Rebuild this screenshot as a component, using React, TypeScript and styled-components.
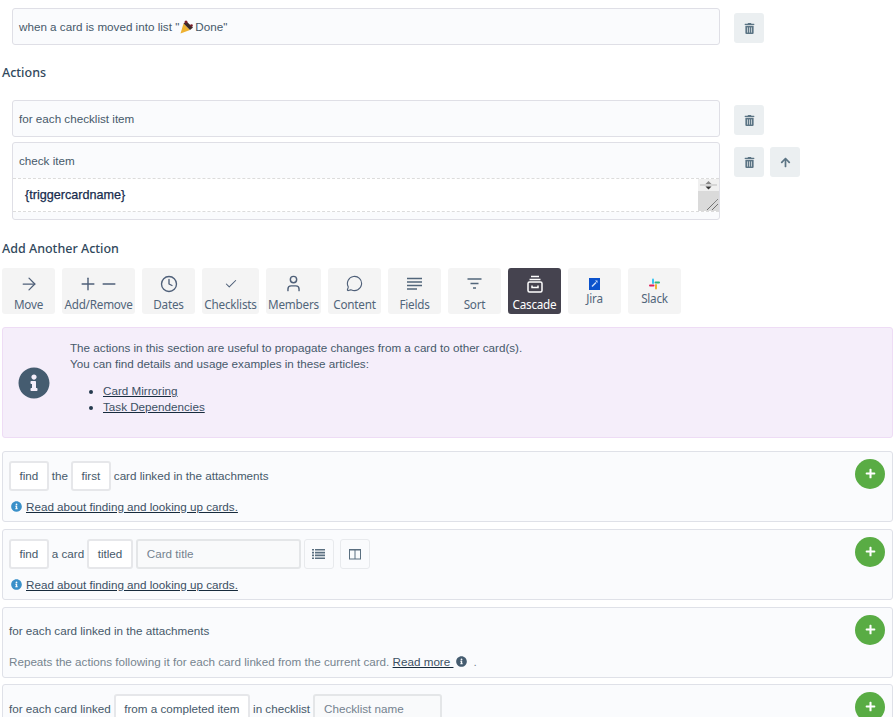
import React from "react";
import styled, { createGlobalStyle } from "styled-components";
import { FaTrashAlt, FaArrowUp, FaInfoCircle, FaPlus } from "react-icons/fa";
import { ArrowRight, Plus, Minus, Clock, Check, User, MessageCircle } from "lucide-react";

const Global = createGlobalStyle`
  html, body { margin: 0; padding: 0; height: 717px; overflow: hidden; background: #fff; }
  body { font-family: "Liberation Sans", Arial, sans-serif; font-size: 11.67px; color: #3f5262; }
`;
const Page = styled.div`
  width: 896px; height: 717px; overflow: hidden; padding: 8px 3px 0 2px; box-sizing: border-box;
`;
const RuleRow = styled.div<{ $mt?: number }>`
  display: flex; align-items: flex-start; gap: 14px; padding-left: 10px; margin-top: ${p => p.$mt ?? 0}px;
`;
const RuleBox = styled.div`
  width: 708px; box-sizing: border-box; border: 1px solid #dfdfe6; border-radius: 3px; background: #fafbfd;
`;
const RuleText = styled.div`
  height: 35px; box-sizing: border-box; padding: 0 0 0 6px; color: #46596a; display: flex; align-items: center;
`;
const RuleTools = styled.div`
  display: flex; gap: 6px; margin-top: 5px;
`;
const ToolButton = styled.button`
  width: 30px; height: 30px; padding: 0; border: 0; border-radius: 3px; background: #ebeff1; color: #5b7484;
  display: flex; align-items: center; justify-content: center; font-size: 11px;
`;
const Heading = styled.h3<{ $mt: number; $mb: number }>`
  font-family: "Noto Sans", sans-serif; font-size: 12.5px; font-weight: 500; line-height: 18px; color: #31485c;
  margin: ${p => p.$mt}px 0 ${p => p.$mb}px 0;
`;
const Editor = styled.div`
  display: flex; height: 32px; box-sizing: content-box; background: #fff; border-top: 1px dashed #dcdcdc; border-bottom: 1px dashed #dcdcdc;
  margin-bottom: 7px;
`;
const EditorText = styled.div`
  flex: 1; padding-left: 12px; line-height: 33px; font-size: 12.6px; color: #172b4d; -webkit-text-stroke: 0.25px #172b4d;
`;
const Scroll = styled.div`
  width: 21px; background: #dadada; display: flex; flex-direction: column;
`;
const ScrollTop = styled.div`
  height: 12px; background: #f0f0f0; display: flex; align-items: center; justify-content: center;
`;
const ScrollGrip = styled.div`
  flex: 1; display: flex; align-items: flex-end; justify-content: flex-end;
`;
const ActionBar = styled.div`
  display: flex; gap: 7px;
`;
const ActionButton = styled.div<{ $w: number; $active?: boolean; $brand?: boolean }>`
  width: ${p => p.$w}px; height: 46px; box-sizing: border-box; border-radius: 3px;
  background: ${p => (p.$active ? "#45434f" : "#f4f4f4")}; color: ${p => (p.$active ? "#fff" : "#51657a")};
  display: flex; flex-direction: column; align-items: center;
  padding-top: ${p => (p.$brand ? 9 : 4)}px;
  font-family: "Noto Sans", sans-serif; font-size: 11.7px; line-height: 16px; white-space: nowrap; letter-spacing: -0.22px;
`;
const ActionIcon = styled.div<{ $brand?: boolean }>`
  height: ${p => (p.$brand ? 13 : 23)}px; display: flex; align-items: center; justify-content: center;
  color: #4e5f78; gap: 1px; margin-bottom: ${p => (p.$brand ? 0 : 1)}px;
`;
const Notice = styled.div`
  display: flex; height: 111px; box-sizing: border-box; margin-top: 13px; background: #f5eefa; border: 1px solid #eedcf5;
  border-radius: 3px; color: #46596a; line-height: 16px;
`;
const NoticeIcon = styled.div`
  width: 67px; flex: none; display: flex; align-items: center; justify-content: center; color: #455c70; font-size: 32px;
  padding: 1px 6px 0 0; box-sizing: border-box;
`;
const NoticeBody = styled.div`
  padding-top: 12px;
`;
const ArticleList = styled.ul`
  margin: 11px 0 0; padding: 0 0 0 33px;
  li::marker { color: #24394d; }
`;
const Link = styled.a`
  color: #3c5064; text-decoration: underline; text-decoration-color: #172b3d;
`;
const Card = styled.div<{ $mt: number }>`
  height: 71px; box-sizing: border-box; margin-top: ${p => p.$mt}px; border: 1px solid #dfe1e8; border-radius: 3px;
  background: #fafbfd; padding: 9px 6px 0; position: relative; color: #46596a;
`;
const CardLine = styled.div`
  display: flex; align-items: center; gap: 3px; height: 30px; box-sizing: border-box; padding-bottom: 2px; white-space: nowrap;
`;
const Chip = styled.div`
  align-self: flex-start;
  height: 30px; box-sizing: border-box; padding: 0 8.5px 2px; border: 2px solid #e6e7ea; border-radius: 3px; background: #fff;
  display: flex; align-items: center; color: #46596a;
`;
const Field = styled.div<{ $w: number }>`
  align-self: flex-start;
  width: ${p => p.$w}px; height: 30px; box-sizing: border-box; padding: 0 9px 2px; border: 2px solid #e4e6e8; border-radius: 3px;
  background: #f9fafb; display: flex; align-items: center; color: #74828f;
`;
const Square = styled.div<{ $ml?: number }>`
  align-self: flex-start;
  width: 30px; height: 30px; box-sizing: border-box; border: 1px solid #e8eaed; border-radius: 3px;
  margin-left: ${p => p.$ml ?? 0}px;
  display: flex; align-items: center; justify-content: center; color: #455c70;
`;
const Help = styled.div`
  display: flex; align-items: center; gap: 4px; margin-top: 7px; height: 16px; padding-left: 2px;
`;
const HelpIcon = styled.span`
  color: #3a90c9; display: flex; font-size: 11px;
`;
const AddButton = styled.div`
  position: absolute; right: 7px; top: 7px; width: 30px; height: 30px; border-radius: 50%; background: #59ac44; color: #fff;
  display: flex; align-items: center; justify-content: center; font-size: 11px; padding-bottom: 2px; box-sizing: border-box;
`;
const PlainLine = styled.div`
  height: 28px; line-height: 26px; margin-top: 1px; white-space: nowrap;
`;
const MutedLine = styled.div`
  display: flex; align-items: center; height: 16px; margin-top: 7px; color: #76848f; white-space: pre;
`;
const InlineIcon = styled.span`
  color: #455c70; display: inline-flex; margin: 0 6px 0 3px; font-size: 11px;
`;
const PopperSvg = styled.svg`
  margin: 0 1px 0 1px; flex: none;
`;

const Popper = () => (
  <PopperSvg width="14" height="14" viewBox="0 0 14 14">
    <path d="M0.5 13.500 L3.500 3.500 L10 10 Z" fill="#eeb130" />
    <path d="M3.500 3.500 L6.500 1.500 L13 7.500 L10 10 Z" fill="#3c2a2a" />
    <circle cx="6" cy="2" r="1.500" fill="#7a1e28" />
    <circle cx="11.500" cy="5.500" r="1.300" fill="#7a1e28" />
  </PopperSvg>
);
const Lines = () => (
  <svg width="16" height="14" viewBox="0 0 16 14" fill="none" stroke="#51657a" strokeWidth="1.6">
    <path d="M0 1.500h15M0 5h15M0 8.500h15M0 12h10" />
  </svg>
);
const Filter = () => (
  <svg width="15" height="12" viewBox="0 0 15 12" fill="none" stroke="#51657a" strokeWidth="1.5">
    <path d="M0.500 1h14M3.500 5.500h8M6 10h3" />
  </svg>
);
const Cabinet = () => (
  <svg width="16" height="18" viewBox="0 0 16 18" fill="none" stroke="#fff" strokeWidth="1.5">
    <path d="M4 1.500h8M2.500 4.500h11" />
    <rect x="1" y="7" width="14" height="10" rx="1.500" />
    <path d="M5 10.500v2h6v-2" />
  </svg>
);
const Jira = () => (
  <svg width="11" height="12" viewBox="0 0 11 12">
    <rect width="11" height="12" fill="#0b52cc" />
    <path d="M2.500 8l2-2 1 1-2 2zM4.500 6l2-2 1 1-2 2zM6 2.500h2.500v2.500z" fill="#cfe0fb" />
  </svg>
);
const Slack = () => (
  <svg width="11" height="12" viewBox="0 0 11 12" fill="none" strokeWidth="2" strokeLinecap="round">
    <path d="M4 1.500v3.500" stroke="#36c5f0" />
    <path d="M1 7.500h3.500" stroke="#e01e5a" />
    <path d="M7 10.500v-3.500" stroke="#ecb22e" />
    <path d="M10 4.500h-3.500" stroke="#2eb67d" />
  </svg>
);
const ListIcon = () => (
  <svg width="13" height="10" viewBox="0 0 13 10" fill="#5a6f80">
    <path d="M0 0h2v1.600H0zM3 0h10v1.600H3zM0 2.800h2v1.600H0zM3 2.800h10v1.600H3zM0 5.600h2v1.600H0zM3 5.600h10v1.600H3zM0 8.400h2v1.600H0zM3 8.400h10v1.600H3z" />
  </svg>
);
const ColumnsIcon = () => (
  <svg width="12" height="12" viewBox="0 0 12 12" fill="none" stroke="#5a6f80" strokeWidth="1">
    <rect x="0.500" y="1.500" width="11" height="9.500" />
    <path d="M6 1.500v9.500M0.500 2h11" />
  </svg>
);
const Updown = () => (
  <svg width="17" height="10" viewBox="0 0 17 10">
    <path d="M0 5h17" stroke="#bbb" />
    <path d="M8.500 1l3 3h-6z" fill="#888" />
    <path d="M8.500 9.500l3-3h-6z" fill="#333" />
  </svg>
);
const Grip = () => (
  <svg width="12" height="12" viewBox="0 0 12 12" stroke="#444" fill="none" strokeDasharray="1 .5">
    <path d="M0 11L11 0M5 11L11 5" />
  </svg>
);

const actions: { label: string; w: number; icon: React.ReactNode; active?: boolean; brand?: boolean }[] = [
  { label: "Move", w: 53, icon: <ArrowRight size={20} strokeWidth={1.5} /> },
  { label: "Add/Remove", w: 73, icon: <><Plus size={20} strokeWidth={1.7} /><Minus size={20} strokeWidth={1.7} /></> },
  { label: "Dates", w: 53, icon: <Clock size={18} strokeWidth={1.8} /> },
  { label: "Checklists", w: 57, icon: <Check size={14} strokeWidth={1.8} /> },
  { label: "Members", w: 55, icon: <User size={19} strokeWidth={1.8} /> },
  { label: "Content", w: 53, icon: <MessageCircle size={17} strokeWidth={1.6} /> },
  { label: "Fields", w: 53, icon: <Lines /> },
  { label: "Sort", w: 53, icon: <Filter /> },
  { label: "Cascade", w: 53, icon: <Cabinet />, active: true },
  { label: "Jira", w: 53, icon: <Jira />, brand: true },
  { label: "Slack", w: 53, icon: <Slack />, brand: true },
];

const HelpLink = () => (
  <Help>
    <HelpIcon><FaInfoCircle /></HelpIcon>
    <Link>Read about finding and looking up cards.</Link>
  </Help>
);

export default function App() {
  return (
    <Page>
      <Global />
      <RuleRow>
        <RuleBox><RuleText>when a card is moved into list "<Popper />Done"</RuleText></RuleBox>
        <RuleTools><ToolButton><FaTrashAlt /></ToolButton></RuleTools>
      </RuleRow>
      <Heading $mt={19} $mb={18}>Actions</Heading>
      <RuleRow>
        <RuleBox><RuleText>for each checklist item</RuleText></RuleBox>
        <RuleTools><ToolButton><FaTrashAlt /></ToolButton></RuleTools>
      </RuleRow>
      <RuleRow $mt={5}>
        <RuleBox>
          <RuleText>check item</RuleText>
          <Editor>
            <EditorText>{"{triggercardname}"}</EditorText>
            <Scroll>
              <ScrollTop><Updown /></ScrollTop>
              <ScrollGrip><Grip /></ScrollGrip>
            </Scroll>
          </Editor>
        </RuleBox>
        <RuleTools>
          <ToolButton><FaTrashAlt /></ToolButton>
          <ToolButton><FaArrowUp /></ToolButton>
        </RuleTools>
      </RuleRow>
      <Heading $mt={20} $mb={10}>Add Another Action</Heading>
      <ActionBar>
        {actions.map(a => (
          <ActionButton key={a.label} $w={a.w} $active={a.active} $brand={a.brand}>
            <ActionIcon $brand={a.brand}>{a.icon}</ActionIcon>
            {a.label}
          </ActionButton>
        ))}
      </ActionBar>
      <Notice>
        <NoticeIcon><FaInfoCircle /></NoticeIcon>
        <NoticeBody>
          The actions in this section are useful to propagate changes from a card to other card(s).<br />
          You can find details and usage examples in these articles:
          <ArticleList>
            <li><Link>Card Mirroring</Link></li>
            <li><Link>Task Dependencies</Link></li>
          </ArticleList>
        </NoticeBody>
      </Notice>
      <Card $mt={13}>
        <CardLine><Chip>find</Chip>the<Chip>first</Chip>card linked in the attachments</CardLine>
        <HelpLink />
        <AddButton><FaPlus /></AddButton>
      </Card>
      <Card $mt={7}>
        <CardLine>
          <Chip>find</Chip>a card<Chip>titled</Chip><Field $w={165}>Card title</Field>
          <Square><ListIcon /></Square>
          <Square $ml={3}><ColumnsIcon /></Square>
        </CardLine>
        <HelpLink />
        <AddButton><FaPlus /></AddButton>
      </Card>
      <Card $mt={7}>
        <PlainLine>for each card linked in the attachments</PlainLine>
        <MutedLine>Repeats the actions following it for each card linked from the current card. <Link>Read more </Link><InlineIcon><FaInfoCircle /></InlineIcon>.</MutedLine>
        <AddButton><FaPlus /></AddButton>
      </Card>
      <Card $mt={6}>
        <CardLine>for each card linked<Chip>from a completed item</Chip>in checklist<Field $w={129}>Checklist name</Field></CardLine>
        <AddButton><FaPlus /></AddButton>
      </Card>
    </Page>
  );
}
